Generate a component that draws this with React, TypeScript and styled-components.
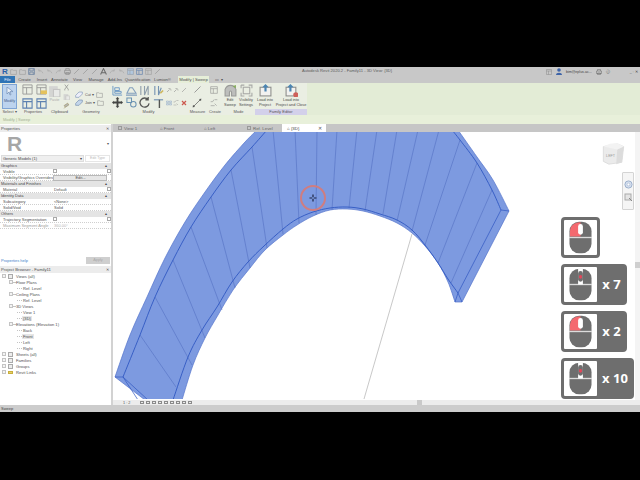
import React from "react";
import styled, { createGlobalStyle } from "styled-components";

const GlobalStyle = createGlobalStyle`
  html, body {
    margin: 0;
    padding: 0;
    width: 640px;
    height: 480px;
    overflow: hidden;
    background: #000;
    font-family: "Liberation Sans", Arial, sans-serif;
  }
  * {
    box-sizing: border-box;
  }
`;

const Page = styled.div`
  width: 640px;
  height: 480px;
  padding-top: 67px;
  background: #000;
`;

const Window = styled.div`
  width: 640px;
  height: 345px;
  display: flex;
  flex-direction: column;
  background: #c9c9c9;
  color: #555;
`;

const TitleBar = styled.div`
  height: 9px;
  display: flex;
  align-items: center;
  position: relative;
  padding-left: 2px;
  background: #c8c8c8;
`;

const AppMark = styled.div`
  width: 5px;
  height: 7px;
  margin-right: 3px;
  color: #2a5fa8;
  font-size: 8px;
  line-height: 7px;
  font-weight: 700;
`;

const Quick = styled.div<{ $on?: boolean }>`
  width: 7px;
  height: 7px;
  margin-right: 2px;
  display: flex;
  opacity: 0.7;
  background: ${(p) => (p.$on ? "#a9c8ea" : "transparent")};
`;

const WindowTitle = styled.div`
  width: 100%;
  position: absolute;
  left: 0;
  top: 1px;
  padding-left: 54px;
  text-align: center;
  font-size: 4.1px;
  line-height: 6px;
  color: #5c5c5c;
`;

const Account = styled.div`
  margin-left: auto;
  display: flex;
  align-items: center;
  gap: 4px;
  padding-right: 2px;
  font-size: 3.6px;
  color: #444;
`;

const WindowControls = styled.span`
  margin-left: 16px;
`;

const TabRow = styled.div`
  height: 7px;
  display: flex;
  align-items: stretch;
  background: #c8c8c8;
`;

const FileTab = styled.div`
  width: 15px;
  background: #2f74b5;
  color: #eef;
  font-size: 4px;
  line-height: 7px;
  text-align: center;
`;

const RibbonTab = styled.div<{ $w: number; $active?: boolean }>`
  width: ${(p) => p.$w}px;
  font-size: 4.2px;
  line-height: 7px;
  text-align: center;
  white-space: nowrap;
  color: #4f4f4f;
  background: ${(p) => (p.$active ? "#e6eed8" : "transparent")};
`;

const Ribbon = styled.div`
  height: 32px;
  display: flex;
  background: #e3ecd6;
`;

const Panel = styled.section<{ $w: number }>`
  width: ${(p) => p.$w}px;
  display: flex;
  flex-direction: column;
  background: #eaeee3;
`;

const PanelBody = styled.div`
  flex: 1;
  min-height: 0;
  display: flex;
  padding-top: 1px;
  svg {
    opacity: 0.82;
  }
`;

const PanelLabel = styled.div<{ $accent?: boolean }>`
  height: 6px;
  font-size: 4px;
  line-height: 6px;
  text-align: center;
  white-space: nowrap;
  color: #555;
  background: ${(p) => (p.$accent ? "#d3d0ea" : "transparent")};
`;

const ModifyButton = styled.div`
  width: 15px;
  height: 25px;
  margin-left: 2px;
  display: flex;
  flex-direction: column;
  align-items: center;
  gap: 3px;
  padding-top: 2px;
  border: 1px solid #7fa4d4;
  background: #bcd3ee;
  font-size: 3.8px;
  color: #45618a;
`;

const IconGrid = styled.div<{ $cols: string; $gap?: number; $left?: number }>`
  display: grid;
  grid-template-columns: ${(p) => p.$cols};
  gap: ${(p) => p.$gap ?? 1}px;
  margin-left: ${(p) => p.$left ?? 0}px;
  align-items: center;
  justify-items: center;
`;

const BigAction = styled.div<{ $w: number }>`
  width: ${(p) => p.$w}px;
  display: flex;
  flex-direction: column;
  align-items: center;
  font-size: 3.9px;
  line-height: 5px;
  text-align: center;
  white-space: nowrap;
  color: #4a4a4a;
`;

const MutedLabel = styled.span`
  color: #aaa;
`;

const SmallText = styled.span`
  font-size: 3.8px;
  color: #555;
  white-space: nowrap;
`;

const GeometryRow = styled.div`
  display: flex;
  align-items: center;
  gap: 2px;
  height: 8px;
`;

const GeometryStack = styled.div`
  display: flex;
  flex-direction: column;
  justify-content: center;
  padding: 3px 0 0 3px;
`;

const ContextBar = styled.div`
  height: 9px;
  padding-left: 3px;
  background: #e8f0da;
  color: #a3b095;
  font-size: 4px;
  line-height: 9px;
`;

const Workspace = styled.div`
  flex: 1;
  min-height: 0;
  display: flex;
`;

const Sidebar = styled.aside`
  width: 113px;
  display: flex;
  flex-direction: column;
  background: #fff;
  border-right: 2px solid #d2d2d2;
`;

const DockHeader = styled.div`
  height: 7px;
  display: flex;
  justify-content: space-between;
  align-items: center;
  padding: 0 2px 0 1px;
  background: #ececec;
  font-size: 4.2px;
  color: #4f4f4f;
`;

const PropertiesPanel = styled.div`
  height: 141px;
  margin-top: 1px;
  display: flex;
  flex-direction: column;
  background: #fff;
`;

const LogoRow = styled.div`
  height: 23px;
  display: flex;
  align-items: center;
  justify-content: space-between;
  padding: 0 2px 0 7px;
`;

const RevitLogo = styled.div`
  color: #a6a6a6;
  font-size: 21px;
  line-height: 21px;
  font-weight: 700;
`;

const SelectorRow = styled.div`
  height: 7px;
  display: flex;
  gap: 1px;
  padding: 0 1px;
  margin-bottom: 1px;
`;

const TypeSelect = styled.div`
  flex: 1;
  padding: 0 1px;
  display: flex;
  justify-content: space-between;
  background: #efefef;
  border: 1px solid #ddd;
  font-size: 4px;
  line-height: 5px;
  color: #444;
`;

const EditType = styled.div`
  width: 25px;
  border: 1px solid #e6e6e6;
  font-size: 3.6px;
  line-height: 5px;
  text-align: center;
  color: #b9b9b9;
`;

const PropHead = styled.div`
  height: 6px;
  padding: 0 4px 0 1px;
  display: flex;
  justify-content: space-between;
  background: #e4e4e4;
  font-size: 4px;
  line-height: 6px;
  color: #444;
`;

const PropRow = styled.div`
  height: 6px;
  display: grid;
  grid-template-columns: 53px 54px 4px;
  font-size: 4px;
  line-height: 5px;
  color: #555;
  border-bottom: 1px dotted #cfcfcf;
`;

const PropName = styled.div<{ $muted?: boolean }>`
  padding-left: 3px;
  white-space: nowrap;
  overflow: hidden;
  color: ${(p) => (p.$muted ? "#a0a0a0" : "#505050")};
`;

const PropValue = styled.div<{ $button?: boolean; $muted?: boolean }>`
  padding-left: 1px;
  white-space: nowrap;
  color: ${(p) => (p.$muted ? "#b5b5b5" : "#505050")};
  text-align: ${(p) => (p.$button ? "center" : "left")};
  background: ${(p) => (p.$button ? "#e6e6e6" : "transparent")};
  border: ${(p) => (p.$button ? "1px solid #b8b8b8" : "none")};
  line-height: ${(p) => (p.$button ? "4px" : "5px")};
`;

const Check = styled.div`
  width: 4px;
  height: 4px;
  border: 1px solid #aaa;
  background: #fff;
`;

const PropFooter = styled.div`
  margin-top: auto;
  height: 9px;
  display: flex;
  justify-content: space-between;
  align-items: center;
  padding: 0 1px 2px 1px;
  font-size: 4px;
  color: #3f7fc8;
`;

const ApplyButton = styled.div`
  width: 24px;
  height: 7px;
  background: #cfcfcf;
  color: #a9a9a9;
  font-size: 3.8px;
  line-height: 7px;
  text-align: center;
`;

const Browser = styled.div`
  flex: 1;
  min-height: 0;
  display: flex;
  flex-direction: column;
`;

const TreeRow = styled.div<{ $indent: number }>`
  height: 6px;
  display: flex;
  align-items: center;
  padding-left: ${(p) => p.$indent}px;
  font-size: 4.1px;
  color: #505050;
  white-space: nowrap;
`;

const Expander = styled.span`
  width: 4px;
  height: 4px;
  flex: none;
  border: 1px solid #c4c4c4;
  background: #f4f4f4;
`;

const Guide = styled.span<{ $w: number }>`
  width: ${(p) => p.$w}px;
  height: 1px;
  flex: none;
  border-top: 1px dotted #c4c4c4;
`;

const NodeIcon = styled.span<{ $yellow?: boolean }>`
  width: 5px;
  height: ${(p) => (p.$yellow ? 3 : 5)}px;
  flex: none;
  margin: 0 2px;
  border: 1px solid ${(p) => (p.$yellow ? "#c9ae3c" : "#aaa")};
  background: ${(p) => (p.$yellow ? "#e6d266" : "#ededed")};
`;

const TreeLabel = styled.span<{ $boxed?: boolean }>`
  padding: 0 1px;
  background: ${(p) => (p.$boxed ? "#e6e6e6" : "transparent")};
`;

const ViewColumn = styled.div`
  flex: 1;
  min-width: 0;
  display: flex;
  flex-direction: column;
`;

const ViewTabs = styled.div`
  height: 8px;
  display: flex;
  background: #c6c6c6;
`;

const ViewTab = styled.div<{ $w: number; $active?: boolean }>`
  width: ${(p) => p.$w}px;
  display: flex;
  align-items: center;
  gap: 2px;
  padding-left: 5px;
  font-size: 4.4px;
  white-space: nowrap;
  color: ${(p) => (p.$active ? "#444" : "#666")};
  background: ${(p) => (p.$active ? "#fff" : "transparent")};
`;

const TabBox = styled.span`
  width: 4px;
  height: 4px;
  border: 1px solid #999;
`;

const TabClose = styled.span`
  margin-left: auto;
  margin-right: 4px;
  font-size: 5px;
  color: #555;
`;

const Canvas = styled.div`
  flex: 1;
  min-height: 0;
  position: relative;
  overflow: hidden;
  background: #fff;
`;

const Model = styled.svg`
  position: absolute;
  left: 0;
  top: 0;
`;

const ViewCube = styled.svg`
  position: absolute;
  left: 489px;
  top: 10px;
`;

const NavBar = styled.div`
  position: absolute;
  left: 509px;
  top: 40px;
  width: 12px;
  height: 38px;
  display: flex;
  flex-direction: column;
  align-items: center;
  justify-content: center;
  gap: 4px;
  border: 1px solid #d4d4d4;
  border-radius: 1px;
  background: #f5f5f5;
`;

const VerticalTrack = styled.div`
  position: absolute;
  right: 0;
  top: 0;
  bottom: 0;
  width: 5px;
  background: #f4f4f4;
`;

const TrackThumb = styled.div`
  position: absolute;
  left: 0;
  top: 130px;
  width: 5px;
  height: 6px;
  background: #cfcfcf;
`;

const CardStack = styled.div`
  position: absolute;
  left: 448px;
  top: 85px;
  display: flex;
  flex-direction: column;
  align-items: flex-start;
  gap: 6px;
`;

const MouseCard = styled.div<{ $w: number }>`
  width: ${(p) => p.$w}px;
  height: 41px;
  display: flex;
  border: 3px solid #6e6e6e;
  border-radius: 4px;
  background: #6e6e6e;
`;

const MouseFace = styled.div`
  width: 33px;
  flex: none;
  display: flex;
  align-items: center;
  justify-content: center;
  background: #fff;
  border-radius: 1px;
`;

const Clicks = styled.div`
  flex: 1;
  padding-left: 2px;
  text-align: center;
  color: #fff;
  font-size: 13px;
  line-height: 35px;
  font-weight: 700;
  font-family: "Open Sans", "Liberation Sans", sans-serif;
  white-space: nowrap;
`;

const HorizontalBar = styled.div`
  height: 5px;
  display: flex;
  align-items: center;
  gap: 2px;
  background: #ececec;
  font-size: 3.8px;
  color: #555;
`;

const ScaleText = styled.span`
  width: 25px;
  padding-left: 10px;
  white-space: nowrap;
`;

const BarIcon = styled.span`
  width: 4px;
  height: 3px;
  border: 1px solid #8a8a8a;
`;

const BarThumb = styled.span`
  margin-left: auto;
  margin-right: 218px;
  width: 5px;
  height: 5px;
  background: #c9c9c9;
`;

const StatusBar = styled.div`
  height: 7px;
  padding-left: 1px;
  background: #cccccc;
  font-size: 4px;
  line-height: 7px;
  color: #444;
`;

type GlyphName =
  | "open" | "save" | "undo" | "redo" | "print" | "line" | "text" | "window"
  | "windowYellow" | "windowBlue" | "paste" | "scissors" | "brush" | "cut" | "join"
  | "align" | "mirror" | "offset" | "mirrorX" | "move" | "copy" | "rotate" | "trim"
  | "array" | "scale" | "pin" | "delete" | "measure" | "sweep" | "visibility" | "load" | "loadClose";

const glyphs: Record<GlyphName, React.ReactNode> = {
  open: <path d="M1 3h4l1 1h5v7H1z" fill="none" stroke="#888" />,
  save: <path d="M1 1h10v10H1zM3 1v4h6V1M3 11V7h6v4" fill="none" stroke="#4d6c96" strokeWidth="1.4" />,
  undo: <path d="M10 9C9 5 6 4 3 5M3 2v3h3" fill="none" stroke="#999" />,
  redo: <path d="M2 9c1-4 4-5 7-4M9 2v3H6" fill="none" stroke="#999" />,
  print: <path d="M3 4V1h6v3M1 4h10v5H1zM3 8h6v3H3z" fill="none" stroke="#666" />,
  line: <path d="M2 10L10 2" stroke="#888" strokeWidth="1.3" />,
  text: <path d="M1 11L6 1l5 10M3 8h6" fill="none" stroke="#444" strokeWidth="1.8" />,
  window: <path d="M1 1h10v10H1zM1 4h10M5 4v7" fill="none" stroke="#8a8a8a" />,
  windowYellow: (
    <g>
      <path d="M1 1h10v10H1zM1 4h10M5 4v7" fill="none" stroke="#8a8a8a" />
      <rect x="5" y="7" width="7" height="4" fill="#e3b93f" />
    </g>
  ),
  windowBlue: <path d="M1 1h10v10H1zM1 4h10M5 4v7" fill="none" stroke="#3f6aa6" strokeWidth="1.2" />,
  paste: (
    <g>
      <rect x="1" y="2" width="8" height="10" fill="#d0d0d0" />
      <rect x="5" y="5" width="6" height="7" fill="#e8e8e8" stroke="#bbb" />
    </g>
  ),
  scissors: <path d="M3 1l6 8M9 1L3 9M3 9v2M9 9v2" fill="none" stroke="#777" strokeWidth="1.2" />,
  brush: <path d="M2 6l6-4 2 3-6 4zM3 9l-1 2" fill="#aaa" stroke="#8a7a40" />,
  cut: <path d="M1 8l5-5h5v3L6 11H1z" fill="#eef" stroke="#6d88b0" />,
  join: <path d="M1 8l5-5h5v3L6 11H1z" fill="#bcd0ec" stroke="#5d7ca8" />,
  align: <path d="M1 1v10h10M3 3h5v3H3zM3 7h7v2H3z" fill="none" stroke="#4f86c0" />,
  mirror: <path d="M1 9l3-6h3l4 6zM0 11h12" fill="none" stroke="#6d8fb5" strokeWidth="1.2" />,
  offset: <path d="M2 1v10M6 1v10l4-10v10" fill="none" stroke="#7d8ea0" strokeWidth="1.2" />,
  mirrorX: (
    <g>
      <path d="M2 1v10M6 1v10l3-8" fill="none" stroke="#5a7fa8" strokeWidth="1.2" />
      <path d="M8 9l3-3" stroke="#c8a938" strokeWidth="1.6" />
    </g>
  ),
  move: <path d="M6 0l2 2H7v3h3V4l2 2-2 2V7H7v3h1l-2 2-2-2h1V7H2v1L0 6l2-2v1h3V2H4z" fill="#222" />,
  copy: (
    <g fill="none" stroke="#4f7fa8" strokeWidth="1.1">
      <path d="M1 1h5v5H1z" />
      <circle cx="8" cy="8" r="3" />
    </g>
  ),
  rotate: <path d="M10 3A5 5 0 1 0 11 7M10 0v3H7" fill="none" stroke="#333" strokeWidth="1.4" />,
  trim: (
    <g fill="none" strokeWidth="1.5">
      <path d="M1 3h10" stroke="#6f8fb0" />
      <path d="M7 3v9" stroke="#333" />
    </g>
  ),
  array: <path d="M1 2h4v3H1zM7 2h4v3H7zM1 7h4v3H1zM7 7h4v3H7z" fill="#d5e0ee" stroke="#7f9abb" />,
  scale: <path d="M1 4h3l2-3M7 1h4M1 10h6M7 7l3 3" fill="none" stroke="#8a8a8a" />,
  pin: <path d="M2 10l4-4M5 2l5 5M7 2l3 3" fill="none" stroke="#7a7a7a" strokeWidth="1.2" />,
  delete: <path d="M2 2l8 8M10 2l-8 8" stroke="#c6382f" strokeWidth="2.4" />,
  measure: (
    <g>
      <path d="M1 11L11 1" stroke="#555" />
      <circle cx="2" cy="10" r="1.2" fill="#333" />
      <circle cx="10" cy="2" r="1.2" fill="#333" />
    </g>
  ),
  sweep: (
    <g>
      <path d="M1 5c2-5 8-5 10 0v6H7V8C7 6 5 6 5 8v3H1z" fill="#b4b4b4" stroke="#888" />
      <path d="M8 2l3-1v3z" fill="#6f9e3c" />
    </g>
  ),
  visibility: (
    <g fill="none" stroke="#9a9a9a">
      <path d="M1 1h3M8 1h3v3M11 8v3H8M4 11H1V8M1 4V1" />
      <rect x="3" y="3" width="6" height="6" />
    </g>
  ),
  load: (
    <g>
      <rect x="1" y="3" width="10" height="8" fill="#f4f4f4" stroke="#7a7a7a" />
      <path d="M6 0l3 3H7v4H5V3H3z" fill="#2a6ea8" />
    </g>
  ),
  loadClose: (
    <g>
      <rect x="1" y="3" width="9" height="8" fill="#f4f4f4" stroke="#7a7a7a" />
      <path d="M5 0l3 3H6v4H4V3H2z" fill="#2a6ea8" />
      <circle cx="10" cy="10" r="2.4" fill="#c9403c" />
    </g>
  ),
};

const Glyph: React.FC<{ name: GlyphName; size?: number }> = ({ name, size = 10 }) => (
  <svg width={size} height={size} viewBox="0 0 12 12">
    {glyphs[name]}
  </svg>
);

// catmull-rom through the points, so the sweep edges come out as curves
const smooth = (pts: number[][], start = true) => {
  let d = start ? `M${pts[0][0]} ${pts[0][1]}` : `L${pts[0][0]} ${pts[0][1]}`;
  for (let i = 0; i < pts.length - 1; i++) {
    const p0 = pts[i - 1] ?? pts[i];
    const p1 = pts[i];
    const p2 = pts[i + 1];
    const p3 = pts[i + 2] ?? p2;
    const c1x = p1[0] + (p2[0] - p0[0]) / 6;
    const c1y = p1[1] + (p2[1] - p0[1]) / 6;
    const c2x = p2[0] - (p3[0] - p1[0]) / 6;
    const c2y = p2[1] - (p3[1] - p1[1]) / 6;
    d += `C${c1x} ${c1y} ${c2x} ${c2y} ${p2[0]} ${p2[1]}`;
  }
  return d;
};

const outerLeft = [[115, 377], [130, 335], [147, 297], [165, 258], [185, 222], [205, 192], [225, 165], [245, 142], [257, 130]];
const outerRight = [[458, 130], [477, 157], [493, 180], [509, 211]];
const underside = [
  [455, 302], [448, 282], [438, 263], [425, 246], [412, 233], [397, 223], [380, 216], [363, 211], [347, 209],
  [330, 210], [313, 216], [297, 225], [283, 235], [265, 250], [250, 268], [233, 290], [218, 315], [205, 338], [193, 365], [182, 400],
];
const innerLeft = [[123, 377], [140, 335], [155, 297], [173, 260], [191, 227], [211, 197], [231, 170], [252, 147], [267, 130]];
const innerRight = [[452, 130], [460, 140], [477, 163], [492, 190], [501, 210]];
const innerArch = [
  [173, 400], [188, 357], [202, 330], [217, 307], [232, 282], [248, 262], [264, 246], [283, 229], [297, 219], [313, 212],
  [330, 208], [347, 207], [363, 209], [380, 214], [397, 220], [412, 230], [425, 245], [438, 263], [448, 279], [458, 293],
];
const ribs = [
  [140, 335, 176, 387], [155, 297, 192, 365], [173, 260, 205, 338], [191, 227, 222, 310], [211, 197, 235, 288], [231, 170, 250, 268],
  [252, 147, 267, 248], [273, 130, 283, 234], [295, 130, 299, 223], [317, 130, 316, 215], [337, 130, 332, 210], [357, 130, 349, 208],
  [377, 130, 365, 211], [397, 130, 383, 214], [418, 130, 397, 221], [439, 130, 412, 231], [460, 140, 425, 245], [477, 163, 438, 263], [492, 190, 451, 283],
];

const ModelDrawing = () => (
  <Model width="522" height="267" viewBox="113 132 522 267">
    <path d="M364 399L412 234" stroke="#b0b0b0" strokeWidth="0.7" fill="none" />
    <path
      d={`${smooth(outerLeft)}${smooth(outerRight, false)}L462 302${smooth(underside, false)}L145 400Z`}
      fill="#7d9ae0"
      stroke="#5474cc"
      strokeWidth="0.7"
    />
    {ribs.map(([x1, y1, x2, y2]) => (
      <line key={`${x1}-${y1}`} x1={x1} y1={y1} x2={x2} y2={y2} stroke="#4c69bd" strokeWidth="0.5" />
    ))}
    <g fill="none" stroke="#3058c2" strokeWidth="0.9">
      <path d={smooth(innerLeft)} />
      <path d={smooth(innerRight)} />
      <path d={smooth(innerArch)} />
      <path d="M501 210L458 293L455 302M458 293L462 302M501 210L509 211M115 377L123 377L138 400M123 377L148 400" strokeWidth="0.7" />
    </g>
    <circle cx="313" cy="198" r="12" fill="none" stroke="#cf7d80" strokeWidth="2" />
    <path d="M313 194.5v7M309.5 198h7" stroke="#1c2440" strokeWidth="1.2" />
    <circle cx="313" cy="198" r="1" fill="#7d9ae0" />
  </Model>
);

const CubeIcon = () => (
  <ViewCube width="23" height="24" viewBox="0 0 24 26">
    <path d="M1 5l15-3 7 3-2 17-14 2-6-3z" fill="#ebebeb" stroke="#dcdcdc" />
    <path d="M16 8l7-3-2 17-6 2z" fill="#dcdcdc" />
    <path d="M1 5l7-3 8-1 7 4-7 3z" fill="#f3f3f3" />
    <text x="4" y="16" fontSize="4" fill="#9a9a9a" fontFamily="Liberation Sans">LEFT</text>
  </ViewCube>
);

const MouseIcon: React.FC<{ button?: "left" | "wheel" }> = ({ button }) => (
  <svg width="23" height="33" viewBox="0 0 24 34">
    <rect x="0.5" y="0.5" width="23" height="33" rx="10" fill="#6e6e6e" />
    {button === "left" && <path d="M12 1C5 1 1 5 1 11v5h11z" fill="#f4696f" />}
    <path d="M0 17h24" stroke="#dcdcdc" strokeWidth="1.4" />
    {button === "wheel" && <rect x="9.5" y="0" width="5" height="17" fill="#fff" />}
    <rect x="9.5" y="3" width="5" height="11" rx="2.5" fill={button === "wheel" ? "#6e6e6e" : "#fff"} />
    {button === "wheel" && <rect x="10.5" y="7" width="3" height="4" rx="1.5" fill="#e2475a" />}
  </svg>
);

const quickIcons: { name: GlyphName; on?: boolean }[] = [
  { name: "open" }, { name: "open" }, { name: "save" }, { name: "undo" }, { name: "undo" }, { name: "redo" },
  { name: "print" }, { name: "line" }, { name: "line" }, { name: "line" }, { name: "text" }, { name: "redo" },
  { name: "undo" }, { name: "window", on: true }, { name: "windowBlue" }, { name: "window" }, { name: "line" },
];

const ribbonTabs: [string, number][] = [
  ["Create", 19], ["Insert", 16], ["Annotate", 19], ["View", 17], ["Manage", 20], ["Add-Ins", 18],
  ["Quantification", 27], ["Lumion®", 23],
];

type Prop = { name: string; value?: string; check?: boolean; button?: boolean; muted?: boolean; thumb?: boolean };

const propertyGroups: { title: string; rows: Prop[] }[] = [
  {
    title: "Graphics",
    rows: [
      { name: "Visible", check: true, thumb: true },
      { name: "Visibility/Graphics Overrides", value: "Edit...", button: true },
    ],
  },
  { title: "Materials and Finishes", rows: [{ name: "Material", value: "Default", thumb: true }] },
  {
    title: "Identity Data",
    rows: [
      { name: "Subcategory", value: "<None>" },
      { name: "Solid/Void", value: "Solid" },
    ],
  },
  {
    title: "Others",
    rows: [
      { name: "Trajectory Segmentation", check: true, thumb: true },
      { name: "Maximum Segment Angle", value: "360.00°", muted: true },
    ],
  },
];

const tree: { label: string; level: 0 | 1 | 2; yellow?: boolean; boxed?: boolean }[] = [
  { label: "Views (all)", level: 0 },
  { label: "Floor Plans", level: 1 },
  { label: "Ref. Level", level: 2 },
  { label: "Ceiling Plans", level: 1 },
  { label: "Ref. Level", level: 2 },
  { label: "3D Views", level: 1 },
  { label: "View 1", level: 2 },
  { label: "{3D}", level: 2, boxed: true },
  { label: "Elevations (Elevation 1)", level: 1 },
  { label: "Back", level: 2 },
  { label: "Front", level: 2, boxed: true },
  { label: "Left", level: 2 },
  { label: "Right", level: 2 },
  { label: "Sheets (all)", level: 0 },
  { label: "Families", level: 0 },
  { label: "Groups", level: 0 },
  { label: "Revit Links", level: 0, yellow: true },
];

const indents = [2, 9, 17];

const App: React.FC = () => (
  <Page>
    <GlobalStyle />
    <Window>
      <TitleBar>
        <AppMark>R</AppMark>
        {quickIcons.map((q, i) => (
          <Quick key={i} $on={q.on}>
            <Glyph name={q.name} size={7} />
          </Quick>
        ))}
        <WindowTitle>Autodesk Revit 2020.2 - Family11 - 3D View: {"{3D}"}</WindowTitle>
        <Account>
          <Glyph name="window" size={6} />
          <svg width="6" height="7" viewBox="0 0 6 7">
            <circle cx="3" cy="2" r="1.8" fill="#3e64a8" />
            <path d="M0 7c0-3 6-3 6 0z" fill="#3e64a8" />
          </svg>
          <span>bim@eplus.ac...</span>
          <Glyph name="print" size={6} />
          <span>ⓘ</span>
          <WindowControls>_ ▫ ✕</WindowControls>
        </Account>
      </TitleBar>

      <TabRow>
        <FileTab>File</FileTab>
        {ribbonTabs.map(([label, w]) => (
          <RibbonTab key={label} $w={w}>{label}</RibbonTab>
        ))}
        <RibbonTab $w={4} />
        <RibbonTab $w={31} $active>Modify | Sweep</RibbonTab>
        <RibbonTab $w={20}>▭ ▾</RibbonTab>
      </TabRow>

      <Ribbon>
        <Panel $w={19}>
          <PanelBody>
            <ModifyButton>
              <svg width="7" height="9" viewBox="0 0 7 9">
                <path d="M1 0v7l2-2 1 3 1-.4-1-3h3z" fill="#f4f7fb" stroke="#5d7ca8" strokeWidth="0.7" />
              </svg>
              Modify
            </ModifyButton>
          </PanelBody>
          <PanelLabel>Select ▾</PanelLabel>
        </Panel>

        <Panel $w={28}>
          <PanelBody>
            <IconGrid $cols="12px 12px" $gap={2} $left={2}>
              <Glyph name="window" size={11} />
              <Glyph name="windowYellow" size={11} />
              <Glyph name="windowBlue" size={11} />
              <Glyph name="windowBlue" size={11} />
            </IconGrid>
          </PanelBody>
          <PanelLabel>Properties</PanelLabel>
        </Panel>

        <Panel $w={25}>
          <PanelBody>
            <BigAction $w={15}>
              <Glyph name="paste" size={13} />
              <MutedLabel>Paste</MutedLabel>
            </BigAction>
            <IconGrid $cols="8px" $gap={1}>
              <Glyph name="scissors" size={7} />
              <Glyph name="paste" size={7} />
              <Glyph name="brush" size={7} />
            </IconGrid>
          </PanelBody>
          <PanelLabel>Clipboard</PanelLabel>
        </Panel>

        <Panel $w={38}>
          <PanelBody>
            <GeometryStack>
              <GeometryRow>
                <Glyph name="cut" size={8} />
                <SmallText>Cut ▾</SmallText>
                <Glyph name="open" size={7} />
              </GeometryRow>
              <GeometryRow>
                <Glyph name="join" size={8} />
                <SmallText>Join ▾</SmallText>
                <Glyph name="open" size={7} />
              </GeometryRow>
            </GeometryStack>
          </PanelBody>
          <PanelLabel>Geometry</PanelLabel>
        </Panel>

        <Panel $w={77}>
          <PanelBody>
            <IconGrid $cols="13px 13px 13px 13px 7px 7px 7px" $gap={0.5} $left={1}>
              <Glyph name="align" size={11} />
              <Glyph name="mirror" size={11} />
              <Glyph name="offset" size={11} />
              <Glyph name="mirrorX" size={11} />
              <Glyph name="pin" size={6} />
              <Glyph name="pin" size={6} />
              <Glyph name="line" size={6} />
              <Glyph name="move" size={11} />
              <Glyph name="copy" size={11} />
              <Glyph name="rotate" size={11} />
              <Glyph name="trim" size={11} />
              <Glyph name="array" size={6} />
              <Glyph name="scale" size={6} />
              <Glyph name="delete" size={6} />
            </IconGrid>
          </PanelBody>
          <PanelLabel>Modify</PanelLabel>
        </Panel>

        <Panel $w={21}>
          <PanelBody>
            <IconGrid $cols="18px" $gap={3} $left={1}>
              <Glyph name="line" size={9} />
              <Glyph name="measure" size={10} />
            </IconGrid>
          </PanelBody>
          <PanelLabel>Measure</PanelLabel>
        </Panel>

        <Panel $w={14}>
          <PanelBody>
            <IconGrid $cols="12px" $gap={2}>
              <Glyph name="window" size={8} />
              <Glyph name="scale" size={8} />
            </IconGrid>
          </PanelBody>
          <PanelLabel>Create</PanelLabel>
        </Panel>

        <Panel $w={33}>
          <PanelBody>
            <BigAction $w={16}>
              <Glyph name="sweep" size={13} />
              Edit<br />Sweep
            </BigAction>
            <BigAction $w={16}>
              <Glyph name="visibility" size={13} />
              Visibility<br />Settings
            </BigAction>
          </PanelBody>
          <PanelLabel>Mode</PanelLabel>
        </Panel>

        <Panel $w={52}>
          <PanelBody>
            <BigAction $w={20}>
              <Glyph name="load" size={13} />
              Load into<br />Project
            </BigAction>
            <BigAction $w={32}>
              <Glyph name="loadClose" size={13} />
              Load into<br />Project and Close
            </BigAction>
          </PanelBody>
          <PanelLabel $accent>Family Editor</PanelLabel>
        </Panel>
      </Ribbon>

      <ContextBar>Modify | Sweep</ContextBar>

      <Workspace>
        <Sidebar>
          <PropertiesPanel>
            <DockHeader>Properties<span>✕</span></DockHeader>
            <LogoRow>
              <RevitLogo>R</RevitLogo>
              <SmallText>▾</SmallText>
            </LogoRow>
            <SelectorRow>
              <TypeSelect>Generic Models (1)<span>▾</span></TypeSelect>
              <EditType>Edit Type</EditType>
            </SelectorRow>
            {propertyGroups.map((group) => (
              <React.Fragment key={group.title}>
                <PropHead>{group.title}<span>▴</span></PropHead>
                {group.rows.map((row) => (
                  <PropRow key={row.name}>
                    <PropName $muted={row.muted}>{row.name}</PropName>
                    {row.check ? (
                      <Check />
                    ) : (
                      <PropValue $button={row.button} $muted={row.muted}>{row.value}</PropValue>
                    )}
                    {row.thumb && <Check />}
                  </PropRow>
                ))}
              </React.Fragment>
            ))}
            <PropFooter>
              Properties help
              <ApplyButton>Apply</ApplyButton>
            </PropFooter>
          </PropertiesPanel>

          <Browser>
            <DockHeader>Project Browser - Family11<span>✕</span></DockHeader>
            {tree.map((item, i) => (
              <TreeRow key={i} $indent={indents[item.level]}>
                {item.level < 2 && <Expander />}
                {item.level === 0 && <NodeIcon $yellow={item.yellow} />}
                {item.level === 1 && <Guide $w={2} />}
                {item.level === 2 && <Guide $w={5} />}
                <TreeLabel $boxed={item.boxed}>{item.label}</TreeLabel>
              </TreeRow>
            ))}
          </Browser>
        </Sidebar>

        <ViewColumn>
          <ViewTabs>
            <ViewTab $w={42}><TabBox />View 1</ViewTab>
            <ViewTab $w={44}>⌂ Front</ViewTab>
            <ViewTab $w={43}>⌂ Left</ViewTab>
            <ViewTab $w={40}><TabBox />Ref. Level</ViewTab>
            <ViewTab $w={44} $active>⌂ {"{3D}"}<TabClose>✕</TabClose></ViewTab>
          </ViewTabs>
          <Canvas>
            <ModelDrawing />
            <CubeIcon />
            <NavBar>
              <svg width="9" height="9" viewBox="0 0 9 9">
                <circle cx="4.5" cy="4.5" r="3.6" fill="#d5dfee" stroke="#9db0cc" />
                <circle cx="4.5" cy="4.5" r="1.4" fill="#fff" stroke="#9db0cc" strokeWidth="0.6" />
              </svg>
              <svg width="9" height="9" viewBox="0 0 9 9">
                <rect x="1" y="1" width="6" height="6" fill="#e4e4e4" stroke="#aaa" />
                <path d="M5 5l3 3" stroke="#888" />
              </svg>
            </NavBar>
            <VerticalTrack><TrackThumb /></VerticalTrack>
            <CardStack>
              <MouseCard $w={39}>
                <MouseFace><MouseIcon button="left" /></MouseFace>
              </MouseCard>
              <MouseCard $w={66}>
                <MouseFace><MouseIcon button="wheel" /></MouseFace>
                <Clicks>x 7</Clicks>
              </MouseCard>
              <MouseCard $w={66}>
                <MouseFace><MouseIcon button="left" /></MouseFace>
                <Clicks>x 2</Clicks>
              </MouseCard>
              <MouseCard $w={73}>
                <MouseFace><MouseIcon button="wheel" /></MouseFace>
                <Clicks>x 10</Clicks>
              </MouseCard>
            </CardStack>
          </Canvas>
          <HorizontalBar>
            <ScaleText>1 : 2</ScaleText>
            <BarIcon /><BarIcon /><BarIcon /><BarIcon /><BarIcon /><BarIcon /><BarIcon /><BarIcon /><BarIcon />
            <BarThumb />
          </HorizontalBar>
        </ViewColumn>
      </Workspace>

      <StatusBar>Sweep</StatusBar>
    </Window>
  </Page>
);

export default App;
